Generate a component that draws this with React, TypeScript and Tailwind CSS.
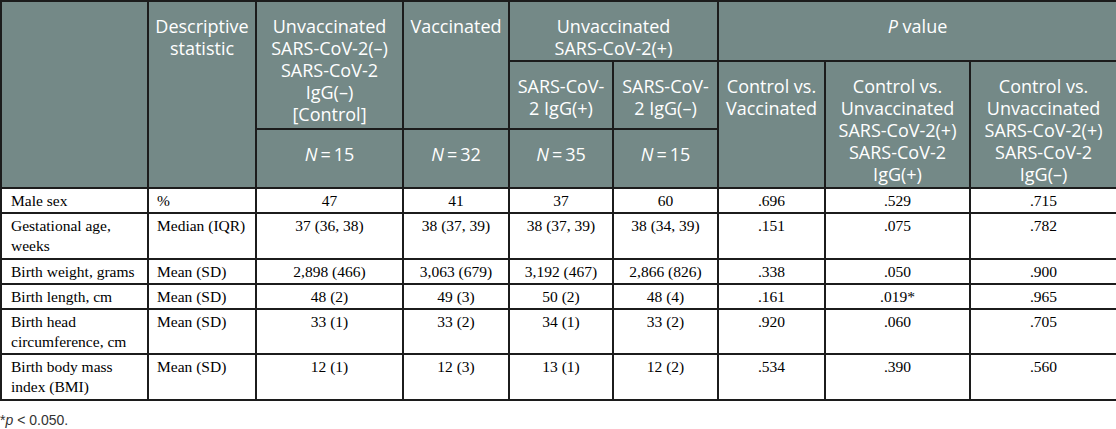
import React from "react";

const H = "border-2 border-[#1c1c1c] align-top text-center px-1 pt-[13px] leading-[22px]";
const B = "border-2 border-[#1c1c1c] align-top pt-[2px] leading-[20px]";

const rows: [string, string, string[]][] = [
  ["Male sex", "%", ["47", "41", "37", "60", ".696", ".529", ".715"]],
  ["Gestational age, weeks", "Median (IQR)", ["37 (36, 38)", "38 (37, 39)", "38 (37, 39)", "38 (34, 39)", ".151", ".075", ".782"]],
  ["Birth weight, grams", "Mean (SD)", ["2,898 (466)", "3,063 (679)", "3,192 (467)", "2,866 (826)", ".338", ".050", ".900"]],
  ["Birth length, cm", "Mean (SD)", ["48 (2)", "49 (3)", "50 (2)", "48 (4)", ".161", ".019*", ".965"]],
  ["Birth head circumference, cm", "Mean (SD)", ["33 (1)", "33 (2)", "34 (1)", "33 (2)", ".920", ".060", ".705"]],
  ["Birth body mass index (BMI)", "Mean (SD)", ["12 (1)", "12 (3)", "13 (1)", "12 (2)", ".534", ".390", ".560"]],
];
const heights = ["h-[25px]", "h-[46px]", "h-[25px]", "h-[25px]", "h-[45px]", "h-[46px]"];

function NCell({ n }: { n: string }) {
  return (
    <td className={H}>
      <i>N</i>
      {"\u2009=\u2009"}
      {n}
    </td>
  );
}

export default function App() {
  return (
    <div className="w-[1116px] bg-white">
      <table className="table-fixed border-collapse w-[1116px]">
        <colgroup>
          <col className="w-[147px]" />
          <col className="w-[108px]" />
          <col className="w-[147px]" />
          <col className="w-[106px]" />
          <col className="w-[104px]" />
          <col className="w-[105px]" />
          <col className="w-[107px]" />
          <col className="w-[145px]" />
          <col className="w-[147px]" />
        </colgroup>
        <thead className="bg-[#748987] text-white text-[18px] font-['Open_Sans',sans-serif]">
          <tr className="h-[60px]">
            <td className={H} rowSpan={3}></td>
            <td className={H} rowSpan={3}>
              Descriptive
              <br />
              statistic
            </td>
            <td className={H} rowSpan={2}>
              Unvaccinated
              <br />
              SARS-CoV-2(–)
              <br />
              SARS-CoV-2
              <br />
              IgG(–)
              <br />
              [Control]
            </td>
            <td className={H} rowSpan={2}>
              Vaccinated
            </td>
            <td className={H} colSpan={2}>
              Unvaccinated
              <br />
              SARS-CoV-2(+)
            </td>
            <td className={H} colSpan={3}>
              <i>P</i> value
            </td>
          </tr>
          <tr className="h-[68px]">
            <td className={H}>
              SARS-CoV-
              <br />2 IgG(+)
            </td>
            <td className={H}>
              SARS-CoV-
              <br />2 IgG(–)
            </td>
            <td className={H} rowSpan={2}>
              Control vs.
              <br />
              Vaccinated
            </td>
            <td className={H} rowSpan={2}>
              Control vs.
              <br />
              Unvaccinated
              <br />
              SARS-CoV-2(+)
              <br />
              SARS-CoV-2
              <br />
              IgG(+)
            </td>
            <td className={H} rowSpan={2}>
              Control vs.
              <br />
              Unvaccinated
              <br />
              SARS-CoV-2(+)
              <br />
              SARS-CoV-2
              <br />
              IgG(–)
            </td>
          </tr>
          <tr className="h-[59px]">
            <NCell n="15" />
            <NCell n="32" />
            <NCell n="35" />
            <NCell n="15" />
          </tr>
        </thead>
        <tbody className="text-[15.5px] text-black font-['Liberation_Serif',serif]">
          {rows.map((r, i) => (
            <tr key={i} className={heights[i]}>
              <td className={B + " text-left pl-[9px] pr-1"}>{r[0]}</td>
              <td className={B + " text-left pl-[8px]"}>{r[1]}</td>
              {r[2].map((v, j) => (
                <td key={j} className={B + " text-center"}>
                  {v}
                </td>
              ))}
            </tr>
          ))}
        </tbody>
      </table>
      <div className="mt-[11px] text-[14px] leading-[17px] text-[#333] font-['Liberation_Sans',sans-serif]">
        *<i>p</i> &lt; 0.050.
      </div>
    </div>
  );
}
